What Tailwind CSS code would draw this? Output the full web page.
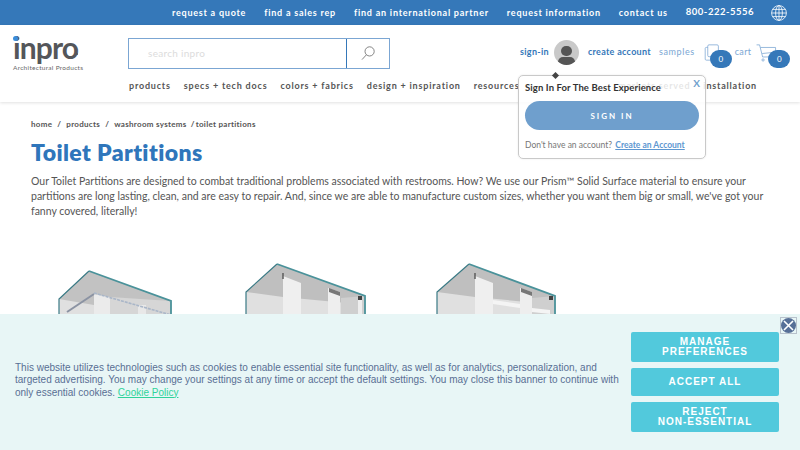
<!DOCTYPE html>
<html lang="en">
<head>
  <meta charset="UTF-8" />
  <title>Toilet Partitions - Inpro</title>
  <script src="https://cdn.jsdelivr.net/npm/@tailwindcss/browser@4"></script>
</head>
<body class="relative h-[450px] w-[800px] overflow-hidden bg-white font-['Lato',sans-serif] text-[#555]">

  <!-- Top bar -->
  <div class="flex h-[25px] items-center justify-end bg-[#3578b9] pr-[13px] text-[9px] font-bold tracking-[0.77px] text-white">
    <a class="mr-[18px]">request a quote</a>
    <a class="mr-[18px]">find a sales rep</a>
    <a class="mr-[18px]">find an international partner</a>
    <a class="mr-[18px]">request information</a>
    <a class="mr-[18px]">contact us</a>
    <a class="mr-[17px] text-[9.5px] tracking-[0.5px]">800-222-5556</a>
    <svg width="16" height="16" viewBox="0 0 16 16" fill="none" stroke="#fff" stroke-width="0.8">
      <circle cx="8" cy="8" r="7.4"/>
      <ellipse cx="8" cy="8" rx="3.4" ry="7.4"/>
      <path d="M8 .6v14.8M.6 8h14.8M1.6 4.4h12.8M1.6 11.6h12.8"/>
    </svg>
  </div>

  <!-- Header -->
  <header class="relative h-[77px] bg-white shadow-[0_1px_3px_rgba(0,0,0,0.12)]">
    <div class="flex h-[48px] items-start">
      <div class="ml-[13px] mt-[9px] w-[115px]">
        <div class="relative h-[27px] text-[30px] leading-[27px] font-bold tracking-[-0.9px] text-[#54565a]">inpro<span class="absolute left-[63px] top-[19px] h-[2px] w-[2px] rounded-full bg-[#54565a]"></span><span class="absolute left-[0px] top-[2px] h-[5px] w-[5px] rounded-full bg-[#3a8ddb]"></span></div>
        <div class="mt-[3px] text-[6.5px] leading-[8px] tracking-[0.3px] text-[#666]">Architectural Products</div>
      </div>
      <div class="mt-[13px] flex h-[31px] w-[262px] border border-[#7ba6d3]">
        <div class="flex-1 pl-[19px] text-[10px] leading-[29px] tracking-[0.3px] text-[#dcdcdc]">search inpro</div>
        <div class="flex w-[43px] items-center justify-center border-l border-l-[#3578b9]">
          <svg width="14" height="15" viewBox="0 0 14 15" fill="none" stroke="#666" stroke-width="0.8"><circle cx="8.6" cy="5.4" r="4.6"/><path d="M5.4 8.8 1 13.6"/></svg>
        </div>
      </div>
      <div class="ml-[130px] mt-[13px] flex h-[28px] items-center text-[9px]">
        <a class="font-bold tracking-[0.3px] text-[#3578b9]">sign-in</a>
        <span class="relative ml-[5px] h-[25px] w-[25px] overflow-hidden rounded-full bg-[#c9c9c9]">
          <span class="absolute left-[7px] top-[6px] h-[10px] w-[11px] rounded-full bg-[#555]"></span>
          <span class="absolute left-[4px] top-[17px] h-[10px] w-[17px] rounded-full bg-[#555]"></span>
        </span>
        <a class="ml-[9px] font-bold tracking-[0.3px] text-[#3578b9]">create account</a>
        <a class="ml-[8px] tracking-[0.6px] text-[#7ba6d3]">samples</a>
        <span class="relative ml-[9px] h-[24px] w-[26px]">
          <svg class="absolute left-0 top-[4px]" width="16" height="17" viewBox="0 0 18 20" fill="none" stroke="#7ba6d3" stroke-width="0.9"><rect x="4" y="1" width="12.5" height="14" rx="1.5"/><path d="M4 4H2.2C1.5 4 1 4.5 1 5.2v12.6C1 18.5 1.5 19 2.2 19h11c.7 0 1.3-.5 1.3-1.2V15"/></svg>
          <span class="absolute left-[6px] top-[10px] flex h-[18px] w-[22px] items-center justify-center rounded-full bg-[#3578b9] text-[8px] text-white">0</span>
        </span>
        <a class="ml-[5px] tracking-[0.3px] text-[#7ba6d3]">cart</a>
        <span class="relative ml-[7px] h-[24px] w-[33px]">
          <svg class="absolute left-[-2px] top-[4px]" width="21" height="19" viewBox="0 0 24 22" fill="none" stroke="#7ba6d3" stroke-width="0.9"><path d="M.5 1H4l3.5 14h13M5 4h17.5v5.5L7 11"/><circle cx="8" cy="18.5" r="1.3"/></svg>
          <span class="absolute left-[10px] top-[10px] flex h-[18px] w-[22px] items-center justify-center rounded-full bg-[#3578b9] text-[8px] text-white">0</span>
        </span>
      </div>
    </div>
    <nav class="relative ml-[129px] mt-[6px] flex gap-[13px] text-[9px] font-bold tracking-[0.8px] text-[#555]">
      <a>products</a>
      <a>specs + tech docs</a>
      <a>colors + fabrics</a>
      <a>design + inspiration</a>
      <a>resources</a>
      <a class="ml-auto">markets served</a>
      <a class="mr-[43px]">installation</a>
    </nav>
  </header>

  <!-- Sign in popover -->
  <div class="absolute left-[518px] top-[75px] h-[84px] w-[188px] rounded-[5px] border border-[#c9c9c9] bg-white/85 px-[6px] shadow-[0_0_2px_rgba(0,0,0,0.1)]">
    <span class="absolute left-[34px] top-[-3px] h-[5px] w-[5px] rotate-45 bg-[#444]"></span>
    <span class="absolute right-[5px] top-[0px] text-[10px] font-bold text-[#6f9fcd]">X</span>
    <div class="mt-[5px] text-[9.5px] leading-[13px] font-bold tracking-[0.1px] text-[#333]">Sign In For The Best Experience</div>
    <div class="mt-[7px] flex h-[29px] items-center justify-center rounded-full bg-[#6f9fcd] text-[8px] font-bold tracking-[2px] text-white">SIGN IN</div>
    <div class="mt-[9px] text-[8.5px] leading-[12px] text-[#777]">Don't have an account? <a class="ml-[1px] font-bold text-[#5d97d1] underline">Create an Account</a></div>
  </div>

  <!-- Main content -->
  <main class="px-[31px] pt-[16px]">
    <div class="flex text-[8px] leading-[12px] font-bold tracking-[0.3px] text-[#555]">
      <span>home</span><span class="mx-[5px]">/</span><span>products</span><span class="mx-[5px]">/</span><span>washroom systems</span><span class="ml-[4px] mr-[1px]">/</span><span>toilet partitions</span>
    </div>
    <h1 class="mt-[7px] text-[23px] leading-[30px] font-extrabold tracking-[0.4px] text-[#2f76bb]">Toilet Partitions</h1>
    <p class="mt-[7px] w-[738px] text-[10.5px] leading-[15px] text-[#555]">Our Toilet Partitions are designed to combat traditional problems associated with restrooms. How? We use our Prism™ Solid Surface material to ensure your partitions are long lasting, clean, and are easy to repair. And, since we are able to manufacture custom sizes, whether you want them big or small, we've got your fanny covered, literally!</p>

    <!-- Partition renderings -->
    <div class="mt-[43px] flex items-start">
      <svg class="ml-[27px] mt-[7px]" width="116" height="46" viewBox="0 0 116 46">
        <path d="M1 30 31 2 113 32v14H1z" fill="#c2c2c2"/>
        <path d="M1 30 36 36v10H1z" fill="#e0e0e0"/>
        <path d="M52 28 113 32v14H52z" fill="#d6d6d6"/>
        <path d="M36 46V25l16 3v18z" fill="#ebebeb"/>
        <path d="M80 46V36h8v10z" fill="#e8e8e8"/>
        <path d="M9 43 36 25" stroke="#8b93a3" stroke-width="2" fill="none"/>
        <path d="M36 24 113 46" stroke="#a9b6c8" stroke-width="1.6" stroke-dasharray="3 1" fill="none"/>
        <path d="M1 46V30L31 2" fill="none" stroke="#3a7a85" stroke-width="1.2"/>
        <path d="M31 2 113 32v14" fill="none" stroke="#4a929a" stroke-width="1.8"/>
      </svg>
      <svg class="ml-[71px]" width="122" height="53" viewBox="0 0 122 53">
        <path d="M1 30 32 2 120 34v19H1z" fill="#bfbfbf"/>
        <path d="M1 30 38 35 112 42v11H1z" fill="#e0e0e0"/>
        <path d="M96 36 120 34v19H96z" fill="#cfcfcf"/>
        <path d="M38 53V14l18 7v32z" fill="#efefef"/>
        <path d="M83 53V26l12 4v23z" fill="#eeeeee"/>
        <path d="M113 53V36h4v17z" fill="#eeeeee"/>
        <path d="M38 11v6" stroke="#555" stroke-width="1.4" fill="none"/>
        <path d="M84 26l11 4v4l-11-4z" fill="#777"/>
        <path d="M113 34h4v4h-4z" fill="#444"/>
        <path d="M1 53V30L32 2" fill="none" stroke="#3a7a85" stroke-width="1.2"/>
        <path d="M32 2 120 34v19" fill="none" stroke="#4a929a" stroke-width="1.8"/>
      </svg>
      <svg class="ml-[69px]" width="122" height="53" viewBox="0 0 122 53">
        <path d="M1 30 33 2 119 34v19H1z" fill="#bfbfbf"/>
        <path d="M1 30 39 35 112 42v11H1z" fill="#e0e0e0"/>
        <path d="M96 36 119 34v19H96z" fill="#cfcfcf"/>
        <path d="M39 53V14l18 7v32z" fill="#efefef"/>
        <path d="M84 53V26l12 4v23z" fill="#eeeeee"/>
        <path d="M57 38 84 42v4L57 42z" fill="#f4f4f4"/>
        <path d="M96 46 114 48v4L96 50z" fill="#f4f4f4"/>
        <path d="M39 11v6" stroke="#555" stroke-width="1.4" fill="none"/>
        <path d="M85 26l11 4v4l-11-4z" fill="#777"/>
        <path d="M113 34h4v4h-4z" fill="#444"/>
        <path d="M1 53V30L33 2" fill="none" stroke="#3a7a85" stroke-width="1.2"/>
        <path d="M33 2 119 34v19" fill="none" stroke="#4a929a" stroke-width="1.8"/>
      </svg>
    </div>
  </main>

  <!-- Cookie banner -->
  <div class="absolute inset-x-0 bottom-0 flex h-[136px] items-center bg-[#e8f6f6] pl-[15px] pr-[21px] font-['Liberation_Sans',sans-serif]">
    <button class="absolute right-[3px] top-[3px] flex h-[17px] w-[17px] items-center justify-center border border-[#b8c2cc]">
      <span class="flex h-[15px] w-[15px] items-center justify-center rounded-full bg-[#566f97]">
        <svg width="11" height="11" viewBox="0 0 11 11" stroke="#fff" stroke-width="1.6"><path d="M1 1l9 9M10 1 1 10"/></svg>
      </span>
    </button>
    <p class="-mt-[3px] w-[606px] text-[10px] leading-[12.6px] text-[#596f94]">This website utilizes technologies such as cookies to enable essential site functionality, as well as for analytics, personalization, and targeted advertising. You may change your settings at any time or accept the default settings. You may close this banner to continue with only essential cookies. <a class="text-[#2fd39a] underline">Cookie Policy</a></p>
    <div class="ml-auto flex w-[148px] flex-col gap-[6px] text-center text-[10px] leading-[10px] font-bold tracking-[1px] text-white">
      <div class="flex h-[30px] items-center justify-center rounded-[2px] bg-[#52c9dc]">MANAGE<br>PREFERENCES</div>
      <div class="flex h-[28px] items-center justify-center rounded-[2px] bg-[#52c9dc]">ACCEPT ALL</div>
      <div class="flex h-[30px] items-center justify-center rounded-[2px] bg-[#52c9dc]">REJECT<br>NON-ESSENTIAL</div>
    </div>
  </div>
</body>
</html>
